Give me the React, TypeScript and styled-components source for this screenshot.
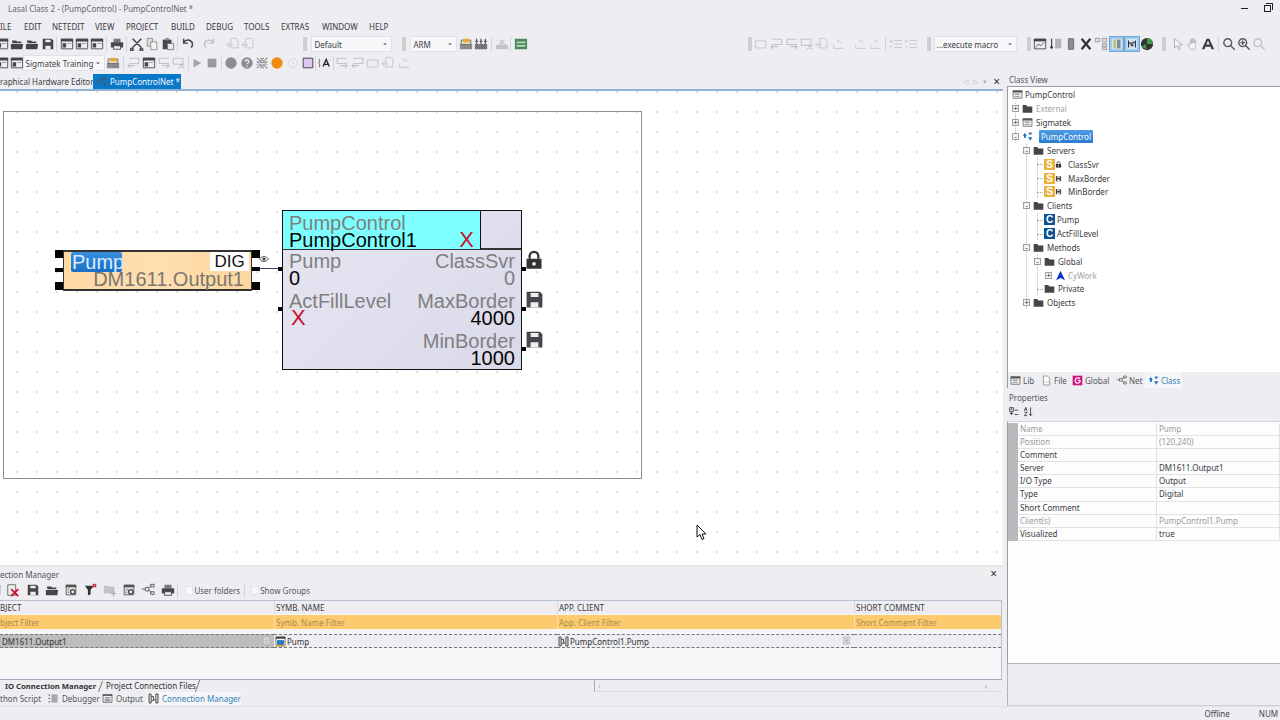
import React from 'react';
import styled, { createGlobalStyle } from 'styled-components';

const GlobalStyle = createGlobalStyle`
  html, body { margin: 0; padding: 0; background: #eeeef2; overflow: hidden; }
  * { box-sizing: border-box; }
`;

const UI_FONT = '"Noto Sans", "Open Sans", sans-serif';
const DIAGRAM_FONT = '"Liberation Sans", Arial, sans-serif';
const DARK = '#45454a';
const FAINT = '#c2c2c8';

/* ---------- small toolbar / tree drawings ---------- */

type IconName =
  | 'folder' | 'folderOpen' | 'save' | 'print' | 'panel' | 'cut' | 'copy' | 'paste' | 'undo' | 'redo'
  | 'ghostDoc' | 'ghostBox' | 'ghostIn' | 'ghostOut' | 'ghostX' | 'ghostLine' | 'indent' | 'play' | 'stop'
  | 'dot' | 'help' | 'hatch' | 'orange' | 'faintDot' | 'lilac' | 'textA' | 'build' | 'buildGrey' | 'board'
  | 'buildNew' | 'chart' | 'sort' | 'column' | 'tools' | 'tree' | 'bars' | 'link' | 'globe' | 'pointer' | 'hand'
  | 'bigA' | 'zoom' | 'zoomIn' | 'zoomGhost' | 'net' | 'classIcon' | 'lib' | 'file' | 'global' | 'filterX'
  | 'deleteX' | 'config' | 'addDoc' | 'debugger' | 'output' | 'manager' | 'lock' | 'eye' | 'io' | 'note'
  | 'dropdown' | 'sortAz' | 'categ' | 'method';

const drawing: Record<IconName, React.ReactNode> = {
  folder: <path d="M1 3h5l2 2h7v9H1z" fill={DARK} />,
  folderOpen: <path d="M2 4h5l1 1h5v2H5l-2 0zM1 8h14l-1 6H1z" fill={DARK} />,
  save: <><path d="M2 2h10l2 2v10H2z" fill={DARK} /><path d="M5 3h6v3H5zM5 10h6v4H5z" fill="#eee" /></>,
  print: <><path d="M4 2h8v4H4z" fill="#777" /><path d="M1 6h14v6H1z" fill={DARK} /><path d="M4 10h8v4H4z" fill="#eee" stroke={DARK} /></>,
  panel: <><path d="M1.500 2.500h13v11h-13z" fill="none" stroke={DARK} /><path d="M1 2h14v3H1zM3 7h4v5H3z" fill={DARK} /><path d="M8 7h5v1H8z" fill="#999" /></>,
  cut: <path d="M3 2l10 10M13 2L3 12M2 13a1.500 1.500 0 1 0 .1 0M13 13a1.500 1.500 0 1 0 .1 0" fill="none" stroke={DARK} strokeWidth="1.800" />,
  copy: <><path d="M2.500 1.500h6v9h-6z" fill="#ddd" stroke="#888" /><path d="M6.500 5.500h7v9h-7z" fill="#f3f3f3" stroke="#888" /></>,
  paste: <><path d="M2 3h10v11H2z" fill={DARK} /><path d="M5 1h4v3H5z" fill="#888" /><path d="M7.500 7.500h7v7h-7z" fill="#eee" stroke="#777" /></>,
  undo: <path d="M3 6c2-3 8-4 10 1 .6 2-.4 4-1.500 5M3 2v5h5" fill="none" stroke={DARK} strokeWidth="1.700" />,
  redo: <path d="M13 6C11 3 5 2 3 7c-.6 2 .4 4 1.500 5M13 2v5H8" fill="none" stroke={FAINT} strokeWidth="1.700" />,
  ghostDoc: <><path d="M5.500 1.500h6l2 2v9h-8z" fill="none" stroke={FAINT} /><path d="M1 9h7M4 6l-3 3 3 3" fill="none" stroke={FAINT} /></>,
  ghostBox: <path d="M1.500 4.500h12v8h-12z" fill="none" stroke={FAINT} />,
  ghostIn: <path d="M2.500 2.500h11v6h-11M1 11h8M4 8l-3 3 3 3" fill="none" stroke={FAINT} strokeWidth="1.200" />,
  ghostOut: <path d="M13.500 2.500h-11v6h11M6 11h8M11 8l3 3-3 3" fill="none" stroke={FAINT} strokeWidth="1.200" />,
  ghostX: <path d="M1.500 2.500h11v7h-11zM8 9l6 5M14 9l-6 5" fill="none" stroke={FAINT} strokeWidth="1.200" />,
  ghostLine: <path d="M3 13h11M3 13V9M8 3l4 4M8 3v3" fill="none" stroke={FAINT} />,
  indent: <path d="M1 5h3M2.500 3.500v3M1 11h3M6 4h9M6 8h9M6 12h9" fill="none" stroke={FAINT} />,
  play: <path d="M4 3l9 5-9 5z" fill="#a6a6aa" />,
  stop: <path d="M3 3h10v10H3z" fill="#9a9a9e" />,
  dot: <circle cx="8" cy="8" r="6.500" fill="#8d8d91" />,
  help: <><circle cx="8" cy="8" r="6.500" fill="#8d8d91" /><path d="M5.800 6.200C6 4 10 4 10 6.200 10 8 8 7.800 8 9.500M8 11v1.500" fill="none" stroke="#eee" strokeWidth="1.500" /></>,
  hatch: <path d="M2 2l12 12M14 2L2 14M6 2l8 8M2 6l8 8M10 2L2 10M14 6l-8 8" fill="none" stroke="#9a9a9e" strokeWidth="1.300" />,
  orange: <circle cx="8" cy="8" r="6.500" fill="#f28a0f" />,
  faintDot: <><circle cx="8" cy="8" r="6" fill="#e2e2e6" /><circle cx="8" cy="8" r="3" fill="none" stroke="#fff" /></>,
  lilac: <path d="M2.500 2.500h11v11h-11z" fill="#dcc7f5" stroke="#333" />,
  textA: <><path d="M2 4c2-1 1 3 0 4 1 1 2 5 0 4" fill="none" stroke="#444" /><path d="M6 3h9v10H6z" fill="#e8e8ea" /><path d="M7 12l3.500-8L14 12M8.500 9.500h4" fill="none" stroke="#222" strokeWidth="1.500" /></>,
  build: <><path d="M1 8h14v6H1z" fill="#8a8a8a" /><path d="M2.500 3.500h11v5h-11z" fill="#e8dcc0" stroke="#666" /><path d="M5 2h7v4H5z" fill="#e9a832" /></>,
  buildGrey: <><path d="M1 8h14v6H1z" fill="#777" /><path d="M3 2v6M8 2v6M13 2v6M1.500 5h3M6.500 5h3M11.500 5h3" stroke="#555" strokeWidth="1.300" /></>,
  board: <><path d="M1 2h14v12H1z" fill="#4a8a60" /><path d="M3 5h10v2H3zM3 9h10v2H3z" fill="#b7d8bc" /></>,
  buildNew: <><path d="M1 9h14v5H1z" fill={FAINT} /><path d="M5 3l6 5M11 3L5 8" stroke={FAINT} strokeWidth="1.400" /><path d="M4 8h8" stroke={FAINT} /></>,
  chart: <><path d="M1.500 2.500h13v11h-13z" fill="#eee" stroke={DARK} /><path d="M1 2h14v3H1z" fill={DARK} /><path d="M3 12l3-4 3 2 4-4" fill="none" stroke="#555" /></>,
  sort: <><path d="M3 2v11M1.500 11L3 13l1.500-2" fill="none" stroke="#333" strokeWidth="1.200" /><path d="M7 2h7v11H7z" fill="#b3b3b7" /></>,
  column: <path d="M5 2h6v12H5z" fill="#8d8d91" stroke="#666" />,
  tools: <path d="M3 2l10 12M13 2L3 14" stroke="#333" strokeWidth="2.600" />,
  tree: <path d="M1.500 1.500h5v4h-5zM9.500 1.500h5v4h-5zM9.500 7.500h5v3h-5zM9.500 11.500h5v3h-5z" fill="#ddd" stroke="#999" />,
  bars: <><path d="M1 1h14v14H1z" fill="#cfe4f7" stroke="#6da5d6" /><path d="M4 3h3v10H4z" fill="#c0bf7a" /><path d="M8 3h4v10H8z" fill="#7b8f8f" /></>,
  link: <><path d="M1 1h14v14H1z" fill="#cfe4f7" stroke="#6da5d6" /><path d="M4 4v8M12 4v8M4 7h3v3h2V6h3" fill="none" stroke="#333" strokeWidth="1.200" /></>,
  globe: <><circle cx="8" cy="8" r="7" fill="#333" /><path d="M8 1a7 7 0 0 1 7 7H8zM2 11l4-3 2 6z" fill="#3f9c4a" /></>,
  pointer: <path d="M4 1.500v11l3-2.500 2 4.500 2-1-2-4.500h4z" fill="#f4f4f6" stroke="#aaa" />,
  hand: <path d="M5 14l-3-5 1.500-1L5 9V3h1.500v4-5H8v5-4.500h1.500V7V4H11v6l-1 4z" fill="#f4f4f6" stroke="#aaa" strokeWidth=".8" />,
  bigA: <path d="M1 14L6.500 2h3L15 14h-3l-1-3H5l-1 3zM6 8.500h4L8 4z" fill="#3a3a3e" fillRule="evenodd" />,
  zoom: <path d="M6.500 2a4.500 4.500 0 1 0 .1 0M10 10l4.500 4.500" fill="none" stroke="#555" strokeWidth="1.500" />,
  zoomIn: <path d="M6.500 2a4.500 4.500 0 1 0 .1 0M10 10l4.500 4.500M4 6.500h5M6.500 4v5" fill="none" stroke="#555" strokeWidth="1.500" />,
  zoomGhost: <path d="M6.500 2a4.500 4.500 0 1 0 .1 0M10 10l4.500 4.500" fill="none" stroke={FAINT} strokeWidth="1.500" />,
  net: <path d="M1 7h4M5 5h4v4H5zM9 6l3-3M9 8l3 3M11 1.500h4v3h-4zM11 10h4v3h-4z" fill="none" stroke="#555" />,
  classIcon: <path d="M1 7l3-4 3 4-1.500 0v3H3V7zM10 2h4v3h-4zM12 5v5M9 9h6l-3 5z" fill="#1b6ec2" />,
  lib: <><path d="M1.500 2.500h13v11h-13z" fill="#eee" stroke="#555" /><path d="M1 2h14v3H1zM4 7h7v1H4zM4 10h7v1H4z" fill="#555" /></>,
  file: <><path d="M3.500 1.500h6l3 3v10h-9z" fill="#fff" stroke="#777" /><path d="M5 10h1M7.500 10h1M10 10h1" stroke="#555" /></>,
  global: <><path d="M1 1h14v14H1z" fill="#d3137c" /><path d="M11.500 5.500C10 3.500 5 3.500 4.500 8c0 4.500 5.500 4.500 7 2.500V8H8.500" fill="none" stroke="#fff" strokeWidth="1.800" /></>,
  filterX: <><path d="M1 3h10L7.500 8v5l-3 1V8z" fill="#333" /><path d="M10 1l4 4M14 1l-4 4" stroke="#c8102e" strokeWidth="1.500" /></>,
  deleteX: <><path d="M2 2h9v12H2z" fill="#eee" stroke="#666" /><path d="M6 7l8 8M14 7l-8 8" stroke="#c8102e" strokeWidth="2" /></>,
  config: <><path d="M2.500 2.500h11v11h-11z" fill="#eee" stroke="#555" /><path d="M2 2h12v3H2z" fill="#555" /><circle cx="10" cy="10" r="2.500" fill="none" stroke="#444" strokeWidth="1.500" /><path d="M4 7h3M4 9h2M4 11h2" stroke="#777" /></>,
  addDoc: <><path d="M1 3h5l1 1h6v8H1z" fill={FAINT} /><path d="M12 9v6M9 12h6" stroke="#aaa" strokeWidth="1.400" /></>,
  debugger: <><path d="M1 3h2M1 8h2M1 13h2" stroke="#333" strokeWidth="1.400" /><path d="M5 2h9v12H5z" fill="#a9a9ad" /></>,
  output: <><path d="M1.500 2.500h13v11h-13z" fill="#f2f2f2" stroke="#444" /><path d="M1 2h14v2H1zM4 6h8v1H4zM4 8.500h8v1H4zM4 11h8v1H4z" fill="#444" /></>,
  manager: <path d="M1.500 1.500h3v13h-3zM11.500 1.500h3v13h-3zM5 5h3v5h3M5 11h3" fill="none" stroke="#333" strokeWidth="1.300" />,
  lock: <><path d="M4.500 7V5a3.500 3.500 0 0 1 7 0v2" fill="none" stroke="#333" strokeWidth="1.800" /><path d="M2 7h12v8H2z" fill="#333" /><circle cx="8" cy="11" r="1.500" fill="#eee" /></>,
  eye: <><path d="M1 8c3-5 11-5 14 0-3 5-11 5-14 0z" fill="none" stroke="#444" strokeWidth="1.500" /><circle cx="8" cy="8" r="2.500" fill="#444" /></>,
  io: <><path d="M1.500 1.500h13v13h-13z" fill="#fff" stroke="#444" /><path d="M1 1h14v3H1z" fill="#444" /><path d="M3 6h10v7H3z" fill="#2b78c2" /><path d="M1 13h14v2H1z" fill="#e0a030" /></>,
  note: <><path d="M2.500 1.500h11v13h-11z" fill="#ddd" stroke="#aaa" /><path d="M5 5h6M5 8h6M5 11h6" stroke="#999" /></>,
  dropdown: <path d="M5 7h6l-3 3z" fill="#555" />,
  sortAz: <path d="M2 7l2-5 2 5M2.800 5h2.400M2 9h4l-4 5h4M11 2v12M8.500 11.500L11 14l2.500-2.500" fill="none" stroke="#333" strokeWidth="1.200" />,
  categ: <path d="M1 1h6v6H1zM3 3.500h2M4 2.500v2M1 10h6M4 8v5M9 5h6M9 12h6" fill="none" stroke="#333" strokeWidth="1.300" />,
  method: <path d="M8 1l6.500 14L8 11.500 1.500 15z" fill="#0a2fd0" />,
};

const Icon = ({ name, size = 14 }: { name: IconName; size?: number }) => (
  <svg width={size} height={size} viewBox="0 0 16 16" style={{ display: 'block', flex: 'none' }}>
    {drawing[name]}
  </svg>
);

/* ---------- chrome ---------- */

const Page = styled.div`
  width: 1280px;
  height: 720px;
  overflow: hidden;
  display: flex;
  flex-direction: column;
  background: #eeeef2;
  color: #2d2d30;
  font-family: ${UI_FONT};
  font-size: 8px;
`;

const TitleBar = styled.div`
  height: 18px;
  display: flex;
  align-items: center;
  justify-content: space-between;
  padding: 0 9px 1px 8px;
  color: #66666a;
`;

const WindowButtons = styled.div`
  display: flex;
  align-items: center;
  gap: 16px;
`;

const Minimize = styled.span`
  width: 7px;
  height: 1px;
  background: #222;
`;

const Restore = styled.span`
  width: 7px;
  height: 7px;
  border: 1px solid #222;
  box-shadow: 1px -1px 0 0 #eeeef2, 2px -2px 0 0 #222;
`;

const MenuBar = styled.div`
  height: 17px;
  display: flex;
  align-items: center;
  color: #38383c;
`;

const MenuItem = styled.span<{ $w: number }>`
  width: ${({ $w }) => $w}px;
  flex: none;
`;

const ToolRow = styled.div`
  height: 18px;
  display: flex;
  align-items: center;
  flex: none;
  & + & { margin-top: 1px; }
`;

const Slot = styled.span<{ $on?: boolean; $w?: number }>`
  width: ${({ $w }) => $w ?? 15.3}px;
  height: 16px;
  flex: none;
  display: flex;
  align-items: center;
  justify-content: center;
  ${({ $on }) => $on && 'outline: 1px solid #6da5d6; outline-offset: -1px; background: #d9e8f6;'}
`;

const Gap = styled.span<{ $w: number }>`
  margin-left: ${({ $w }) => $w}px;
  flex: none;
`;

const Sep = styled.span<{ $l?: number; $r?: number }>`
  width: 1px;
  height: 15px;
  flex: none;
  background: #d4d4da;
  margin: 0 ${({ $r }) => $r ?? 2}px 0 ${({ $l }) => $l ?? 2}px;
`;

const Grip = styled.span<{ $l: number; $r: number }>`
  width: 4px;
  height: 14px;
  flex: none;
  margin: 0 ${({ $r }) => $r}px 0 ${({ $l }) => $l}px;
  background-image: radial-gradient(circle, #a9a9ae 0.6px, transparent 0.8px);
  background-size: 2px 2px;
`;

const Combo = styled.div<{ $w: number }>`
  width: ${({ $w }) => $w}px;
  height: 16px;
  flex: none;
  background: #f7f7f9;
  border: 1px solid #e2e2e6;
  display: flex;
  align-items: center;
  justify-content: space-between;
  padding: 0 1px 0 2px;
  color: #3e3e42;
  white-space: nowrap;
`;

/* ---------- work area ---------- */

const Workspace = styled.div`
  flex: 1;
  min-height: 0;
  display: grid;
  grid-template-columns: 1003px 4px 273px;
`;

const LeftColumn = styled.div`
  display: flex;
  flex-direction: column;
  min-height: 0;
`;

const DocTabs = styled.div`
  height: 19px;
  flex: none;
  display: flex;
  align-items: flex-end;
  justify-content: space-between;
  border-bottom: 2px solid #8fb2d9;
  padding-right: 3px;
`;

const DocTab = styled.div<{ $active?: boolean }>`
  height: 15px;
  display: flex;
  align-items: center;
  gap: 3px;
  padding: 0 0 1px ${({ $active }) => ($active ? '3px' : 0)};
  margin-right: 2px;
  width: ${({ $active }) => ($active ? '88px' : '91px')};
  background: ${({ $active }) => ($active ? '#0a78c8' : 'transparent')};
  color: ${({ $active }) => ($active ? '#f4f9ff' : '#3e3e42')};
  white-space: nowrap;
`;

const TabList = styled.div`
  display: flex;
  align-items: flex-end;
`;

const DocNav = styled.div`
  height: 15px;
  display: flex;
  align-items: center;
  gap: 5px;
  color: #b5b5ba;
  font-size: 7px;
`;

const CloseMark = styled.span`
  color: #333;
  font-size: 12px;
  line-height: 1;
  margin-left: 1px;
`;

const Canvas = styled.div`
  height: 474px;
  flex: none;
  position: relative;
  overflow: hidden;
  background-color: #ffffff;
  background-image: radial-gradient(circle, #cfcfcf 0.6px, transparent 0.9px);
  background-size: 20px 20px;
  background-position: 7px -9px;
  font-family: ${DIAGRAM_FONT};
`;

const Sheet = styled.div`
  position: absolute;
  left: 3px;
  top: 20px;
  width: 639px;
  height: 368px;
  border: 1px solid #8c8c8c;
`;

const Pin = styled.span<{ $x: number; $y: number; $w: number; $h: number }>`
  position: absolute;
  left: ${({ $x }) => $x}px;
  top: ${({ $y }) => $y}px;
  width: ${({ $w }) => $w}px;
  height: ${({ $h }) => $h}px;
  background: #050505;
`;

const Wire = styled.span`
  position: absolute;
  left: 260px;
  top: 177px;
  width: 19px;
  height: 1px;
  background: #3d3d78;
`;

const OutputNode = styled.div`
  position: absolute;
  left: 63px;
  top: 159px;
  width: 189px;
  height: 41px;
  border-top: 2px solid #333;
  border-bottom: 2px solid #333;
  border-left: 1px solid #333;
  border-right: 1px solid #333;
  background: linear-gradient(90deg, #fdd9a4, #fedfb0 50%, #fdd79e);
  display: flex;
  flex-direction: column;
  font-size: 20px;
  line-height: 20px;
`;

const NodeTop = styled.div`
  height: 19px;
  flex: none;
  display: flex;
  justify-content: space-between;
  padding: 0 2px 0 7px;
`;

const Highlighted = styled.span`
  width: 51px;
  height: 20px;
  background: linear-gradient(#3a90e0, #1b6ec4);
  border-radius: 2px;
  color: #d9ecff;
  padding-left: 1px;
`;

const KindTag = styled.span`
  width: 39px;
  height: 19px;
  background: #fff;
  color: #111;
  font-size: 17px;
  text-align: center;
`;

const NodeServer = styled.div`
  text-align: right;
  padding-right: 7px;
  color: #7c7772;
  line-height: 17px;
`;

const ClassNode = styled.div`
  position: absolute;
  left: 282px;
  top: 119px;
  width: 240px;
  height: 160px;
  border: 1px solid #111;
  background: linear-gradient(135deg, #e6e6f2, #d9d9ea);
  display: flex;
  flex-direction: column;
  font-size: 20px;
`;

const ClassHead = styled.div`
  height: 39px;
  flex: none;
  display: grid;
  grid-template-columns: 198px 1fr;
  border-bottom: 2px solid #333;
`;

const ClassTitle = styled.div`
  background: #7dffff;
  border-right: 1px solid #111;
  padding: 3px 6px 0;
  position: relative;
`;

const GreyLine = styled.div<{ $right?: boolean }>`
  height: 19px;
  line-height: 19px;
  color: #7f7f7f;
  text-align: ${({ $right }) => ($right ? 'right' : 'left')};
  white-space: nowrap;
`;

const BlackLine = styled.div<{ $right?: boolean; $grey?: boolean }>`
  height: 18px;
  line-height: 18px;
  margin-top: -2px;
  color: ${({ $grey }) => ($grey ? '#7f7f7f' : '#050505')};
  text-align: ${({ $right }) => ($right ? 'right' : 'left')};
  white-space: nowrap;
`;

const CrossMark = styled.span`
  color: #c8102e;
  font-size: 22px;
`;

const PortCross = styled(CrossMark)`
  margin-left: 2px;
`;

const TitleCross = styled(CrossMark)`
  position: absolute;
  right: 6px;
  bottom: -1px;
  line-height: 20px;
`;

const PortGrid = styled.div`
  display: grid;
  grid-template-columns: 1fr 1fr;
  grid-auto-rows: 40px;
  padding: 2px 6px 0;
`;

const PortCell = styled.div``;

const Overlay = styled.span<{ $x: number; $y: number }>`
  position: absolute;
  left: ${({ $x }) => $x}px;
  top: ${({ $y }) => $y}px;
`;

const Splitter = styled.div`
  height: 2px;
  flex: none;
  background: #e6e6ea;
`;

/* ---------- connection manager ---------- */

const ManagerPanel = styled.div`
  height: 125px;
  flex: none;
  display: flex;
  flex-direction: column;
  margin-right: 1px;
`;

const PanelTitle = styled.div<{ $pad?: number; $left?: number }>`
  height: 14px;
  flex: none;
  display: flex;
  align-items: center;
  gap: 5px;
  padding: 0 ${({ $pad }) => $pad ?? 2}px 0 ${({ $left }) => $left ?? 0}px;
  color: #55555a;
  white-space: nowrap;
`;

const Dotted = styled.span`
  flex: 1;
  height: 5px;
  background-image: radial-gradient(circle, #c4c4c8 0.5px, transparent 0.7px);
  background-size: 2px 2px;
`;

const ManagerTools = styled.div`
  height: 18px;
  flex: none;
  display: flex;
  align-items: center;
  color: #55555a;
`;

const CheckBox = styled.span`
  width: 8px;
  height: 9px;
  background: #f8f8fa;
  border: 1px solid #e4e4e8;
  flex: none;
  margin-right: 1px;
`;

const ConnectionGrid = styled.div`
  flex: 1;
  margin-top: 1px;
  background: #f6f6f8;
  border-top: 1px solid #b6c2d2;
  border-right: 1px solid #b6c2d2;
  border-bottom: 1px solid #9eaabc;
  min-height: 0;
`;

const GridRow = styled.div<{ $h: number; $top?: number }>`
  display: grid;
  grid-template-columns: 274px 283px 297px 1fr;
  height: ${({ $h }) => $h}px;
  margin-top: ${({ $top }) => $top ?? 0}px;
  align-items: stretch;
`;

const HeadCell = styled.div`
  display: flex;
  align-items: center;
  padding-left: 1px;
  border-left: 1px solid #d8d8de;
  color: #3a3a3e;
  background: #eeeef2;
  &:first-child { border-left: 0; padding-left: 0; }
`;

const FilterCell = styled.div`
  display: flex;
  align-items: center;
  padding-left: 1px;
  background: #fdcb6e;
  border-left: 1px solid #fde0a8;
  color: #a88a50;
  &:first-child { border-left: 0; padding-left: 0; }
`;

const DataCell = styled.div<{ $selected?: boolean }>`
  display: flex;
  align-items: center;
  gap: 1px;
  position: relative;
  background: ${({ $selected }) => ($selected ? '#bdbdbd' : '#eeeef2')};
  border-top: 1px dashed #777;
  border-bottom: 1px dashed #777;
  color: #333;
  padding-left: ${({ $selected }) => ($selected ? 2 : 1)}px;
`;

const CellNote = styled.span`
  position: absolute;
  right: 3px;
  top: 1px;
`;

const BottomTabs = styled.div`
  height: 12px;
  flex: none;
  display: flex;
  align-items: center;
  color: #333;
  white-space: nowrap;
`;

const ConnTab = styled.span<{ $bold?: boolean; $w: number }>`
  width: ${({ $w }) => $w}px;
  flex: none;
  font-weight: ${({ $bold }) => ($bold ? 700 : 400)};
  font-size: ${({ $bold }) => ($bold ? 7.7 : 8)}px;
  border-right: 1px solid #777;
  transform: skewX(-20deg);
  & > span { display: block; transform: skewX(20deg); padding: 0 0 1px 5px; }
`;

const ScrollTrack = styled.div`
  margin-left: auto;
  width: 408px;
  height: 12px;
  display: flex;
  align-items: center;
  justify-content: space-between;
  padding: 0 15px 0 3px;
  border-left: 1px solid #aaa;
  border-bottom: 1px solid #dcdce0;
  color: #b0b0b5;
`;

const ToolWindows = styled.div`
  height: 14px;
  flex: none;
  display: flex;
  align-items: center;
  padding-bottom: 1px;
  color: #555;
  white-space: nowrap;
`;

const ToolWindowTab = styled.div<{ $active?: boolean; $w: number; $flush?: boolean }>`
  width: ${({ $w }) => $w}px;
  height: 13px;
  flex: none;
  display: flex;
  align-items: center;
  gap: 3px;
  padding-left: ${({ $flush }) => ($flush ? 0 : 2)}px;
  background: ${({ $active }) => ($active ? '#f6f6f9' : 'transparent')};
  color: ${({ $active }) => ($active ? '#2f7fb8' : '#55555a')};
`;

/* ---------- right column ---------- */

const RightColumn = styled.div`
  display: flex;
  flex-direction: column;
  min-height: 0;
`;

const TreeBox = styled.div`
  height: 286px;
  flex: none;
  background: #fff;
  border-top: 1px solid #9a9a9e;
  border-left: 1px solid #9a9a9e;
  padding: 1px 0 0 2px;
  overflow: hidden;
`;

const TreeRowBox = styled.div`
  height: 13.87px;
  display: flex;
  align-items: center;
  white-space: nowrap;
  color: #3a3a3e;
`;

const IndentCell = styled.span<{ $line?: boolean }>`
  width: 11px;
  height: 100%;
  flex: none;
  ${({ $line }) => $line && 'background: linear-gradient(#bbb 50%, transparent 50%) 5px 0 / 1px 2px repeat-y;'}
`;

const RootIndent = styled.span`
  width: 1px;
  flex: none;
`;

const ExpanderCell = styled.span<{ $above?: boolean; $below?: boolean; $leaf?: boolean }>`
  width: 11px;
  height: 100%;
  flex: none;
  position: relative;
  display: flex;
  align-items: center;
  justify-content: center;
  ${({ $above, $below }) =>
    ($above || $below) &&
    `background: linear-gradient(#bbb 50%, transparent 50%) 5px ${$above ? '0' : '7px'} / 1px 2px repeat-y;`}
  &::after {
    ${({ $leaf }) =>
      $leaf && `content: ''; position: absolute; left: 5px; top: 7px; width: 6px; border-top: 1px dotted #aaa;`}
  }
`;

const ExpanderBox = styled.span`
  width: 7px;
  height: 7px;
  background: #f2f2f2;
  border: 1px solid #a0a0a4;
  color: #333;
  font: 8px/5px ${DIAGRAM_FONT};
  text-align: center;
  z-index: 1;
`;

const TreeIcon = styled.span<{ $gap: number }>`
  display: flex;
  align-items: center;
  flex: none;
  margin: 0 ${({ $gap }) => $gap}px 0 1px;
`;

const SBadge = styled.span`
  width: 11px;
  height: 11px;
  background: #eeb13c;
  color: #fff;
  font: 700 10px/11px ${DIAGRAM_FONT};
  text-align: center;
  flex: none;
`;

const CBadge = styled(SBadge)`
  background: #0b5394;
`;

const TreeLabel = styled.span<{ $selected?: boolean; $muted?: boolean }>`
  color: ${({ $selected, $muted }) => ($selected ? '#fff' : $muted ? '#a2a2a6' : '#3a3a3e')};
  ${({ $selected }) =>
    $selected && `background: linear-gradient(#4d9be4, #2a7dd0); padding: 0 2px; height: 13px; line-height: 13px; border-radius: 1px;`}
`;

const PanelTabs = styled.div`
  height: 16px;
  flex: none;
  display: flex;
  align-items: center;
  padding-left: 2px;
  border-left: 1px solid #9a9a9e;
  color: #55555a;
`;

const PanelTab = styled.div<{ $active?: boolean; $w: number }>`
  width: ${({ $w }) => $w}px;
  height: 16px;
  flex: none;
  display: flex;
  align-items: center;
  gap: 2px;
  padding-left: ${({ $active }) => ($active ? 3 : 0)}px;
  background: ${({ $active }) => ($active ? '#f6f6f9' : 'transparent')};
  color: ${({ $active }) => ($active ? '#2f7fb8' : '#55555a')};
`;

const PropsTools = styled.div`
  height: 17px;
  flex: none;
  display: flex;
  align-items: center;
  padding: 0 0 2px 2px;
  gap: 4px;
`;

const PropsGrid = styled.div`
  height: 243px;
  flex: none;
  padding-top: 1px;
  background: #fdfdfd;
  border-top: 1px solid #d4d4d8;
  border-bottom: 1px solid #b4b4b8;
  border-left: 1px solid #9a9a9e;
`;

const PropRow = styled.div<{ $muted?: boolean }>`
  height: 13.1px;
  display: grid;
  grid-template-columns: 10px 139px 1fr;
  color: ${({ $muted }) => ($muted ? '#9a9a9e' : '#3a3a3e')};
  line-height: 12px;
`;

const PropMargin = styled.span`
  background: #b9b9bd;
`;

const PropCell = styled.span`
  padding-left: 2px;
  border-bottom: 1px solid #e2e2e6;
  border-right: 1px solid #e2e2e6;
  white-space: nowrap;
`;

const FootBox = styled.div`
  flex: 1;
  border-left: 1px solid #b4b4b8;
  border-bottom: 1px solid #cfcfd3;
`;

const PanelGap = styled.div<{ $h: number }>`
  height: ${({ $h }) => $h}px;
  flex: none;
`;

const StatusBar = styled.div`
  height: 14px;
  flex: none;
  display: flex;
  align-items: center;
  justify-content: flex-end;
  gap: 29px;
  padding-right: 2px;
  border-top: 1px solid #e2e2e6;
  color: #44444a;
`;

const Cursor = styled.svg`
  position: absolute;
  left: 696px;
  top: 433px;
`;

/* ---------- data ---------- */

const menu: [string, number][] = [
  ['ILE', 24], ['EDIT', 28], ['NETEDIT', 43], ['VIEW', 31], ['PROJECT', 45], ['BUILD', 35], ['DEBUG', 38],
  ['TOOLS', 37], ['EXTRAS', 41], ['WINDOW', 47], ['HELP', 30],
];

type TreeItem = {
  guides: boolean[];
  box?: '+' | '-';
  leaf?: boolean;
  above?: boolean;
  below?: boolean;
  icon: React.ReactNode;
  gap: number;
  label: string;
  selected?: boolean;
  muted?: boolean;
};

const folderIcon = <Icon name="folder" size={11} />;
const badge = (kind: 'lock' | 'save') => (
  <>
    <SBadge>S</SBadge>
    <Icon name={kind} size={7} />
  </>
);

const treeItems: TreeItem[] = [
  { guides: [], box: '+', below: true, icon: folderIcon, gap: 3, label: 'External', muted: true },
  { guides: [], box: '+', above: true, below: true, icon: <Icon name="lib" size={11} />, gap: 3, label: 'Sigmatek' },
  { guides: [], box: '-', above: true, icon: <Icon name="classIcon" size={11} />, gap: 6, label: 'PumpControl', selected: true },
  { guides: [false], box: '-', below: true, icon: folderIcon, gap: 3, label: 'Servers' },
  { guides: [false, true], leaf: true, above: true, below: true, icon: badge('lock'), gap: 6, label: 'ClassSvr' },
  { guides: [false, true], leaf: true, above: true, below: true, icon: badge('save'), gap: 6, label: 'MaxBorder' },
  { guides: [false, true], leaf: true, above: true, icon: badge('save'), gap: 6, label: 'MinBorder' },
  { guides: [false], box: '-', above: true, below: true, icon: folderIcon, gap: 3, label: 'Clients' },
  { guides: [false, true], leaf: true, above: true, below: true, icon: <CBadge>C</CBadge>, gap: 2, label: 'Pump' },
  { guides: [false, true], leaf: true, above: true, icon: <CBadge>C</CBadge>, gap: 2, label: 'ActFillLevel' },
  { guides: [false], box: '-', above: true, below: true, icon: folderIcon, gap: 3, label: 'Methods' },
  { guides: [false, true], box: '-', below: true, icon: folderIcon, gap: 3, label: 'Global' },
  { guides: [false, true, true], box: '+', icon: <Icon name="method" size={11} />, gap: 2, label: 'CyWork', muted: true },
  { guides: [false, true], leaf: true, above: true, icon: folderIcon, gap: 3, label: 'Private' },
  { guides: [false], box: '+', above: true, icon: folderIcon, gap: 3, label: 'Objects' },
];

const props: [string, string, boolean][] = [
  ['Name', 'Pump', true],
  ['Position', '(120,240)', true],
  ['Comment', '', false],
  ['Server', 'DM1611.Output1', false],
  ['I/O Type', 'Output', false],
  ['Type', 'Digital', false],
  ['Short Comment', '', false],
  ['Client(s)', 'PumpControl1.Pump', true],
  ['Visualized', 'true', false],
];

const slots = (names: IconName[], onNames: IconName[] = [], w?: number) =>
  names.map((n, i) => (
    <Slot key={`${n}${i}`} $on={onNames.includes(n)} $w={w}>
      <Icon name={n} />
    </Slot>
  ));

function TreeRow({ item }: { item: TreeItem }) {
  return (
    <TreeRowBox>
      {item.guides.map((line, i) => (
        <IndentCell key={i} $line={line} />
      ))}
      <ExpanderCell $above={item.above} $below={item.below} $leaf={item.leaf}>
        {item.box && <ExpanderBox>{item.box}</ExpanderBox>}
      </ExpanderCell>
      <TreeIcon $gap={item.gap}>{item.icon}</TreeIcon>
      <TreeLabel $selected={item.selected} $muted={item.muted}>
        {item.label}
      </TreeLabel>
    </TreeRowBox>
  );
}

export default function App() {
  return (
    <Page>
      <GlobalStyle />
      <TitleBar>
        <span>Lasal Class 2 - (PumpControl) - PumpControlNet *</span>
        <WindowButtons>
          <Minimize />
          <Restore />
        </WindowButtons>
      </TitleBar>

      <MenuBar>
        {menu.map(([label, w]) => (
          <MenuItem key={label} $w={w}>{label}</MenuItem>
        ))}
      </MenuBar>

      <ToolRow>
        <Gap $w={-6} />
        {slots(['panel', 'folderOpen', 'folderOpen', 'save'])}
        <Sep $l={1} />
        {slots(['panel', 'panel', 'panel'])}
        <Sep $l={1} />
        {slots(['print'])}
        <Sep />
        {slots(['cut', 'copy', 'paste'])}
        <Sep />
        <Slot><Icon name="undo" /></Slot>
        <Gap $w={6} />
        <Slot><Icon name="redo" /></Slot>
        <Gap $w={8} />
        {slots(['ghostDoc', 'ghostDoc'])}
        <Grip $l={48} $r={4} />
        <Combo $w={81}>Default<Icon name="dropdown" size={10} /></Combo>
        <Grip $l={10} $r={4} />
        <Combo $w={47}>ARM<Icon name="dropdown" size={10} /></Combo>
        <Gap $w={1} />
        {slots(['build', 'buildGrey'])}
        <Sep />
        {slots(['buildNew'])}
        <Sep $l={1} />
        {slots(['board'])}
        <Grip $l={219} $r={2} />
        {slots(['ghostBox', 'ghostIn', 'ghostOut', 'ghostX', 'ghostDoc', 'ghostLine'])}
        <Gap $w={7} />
        {slots(['ghostLine', 'ghostLine'])}
        <Sep />
        {slots(['indent', 'indent'])}
        <Grip $l={8} $r={3} />
        <Combo $w={83}>...execute macro<Icon name="dropdown" size={10} /></Combo>
        <Grip $l={10} $r={2} />
        {slots(['chart', 'sort', 'column', 'tools', 'tree', 'bars', 'link', 'globe'], ['bars', 'link'])}
        <Grip $l={7} $r={4} />
        {slots(['pointer', 'hand', 'bigA'])}
        <Sep />
        {slots(['zoom', 'zoomIn', 'zoomGhost'])}
      </ToolRow>

      <ToolRow>
        <Gap $w={-6} />
        {slots(['panel', 'panel'])}
        <Gap $w={-2} />
        <Combo $w={82}>Sigmatek Training<Icon name="dropdown" size={10} /></Combo>
        <Gap $w={1} />
        {slots(['build'])}
        <Sep />
        {slots(['ghostIn', 'panel', 'ghostOut', 'ghostX'])}
        <Sep $l={1} $r={0} />
        {slots(['play', 'stop'])}
        <Sep $l={1} $r={2} />
        {slots(['dot', 'help', 'hatch', 'orange', 'faintDot', 'lilac'])}
        <Sep $l={0} $r={0} />
        {slots(['textA'])}
        <Sep $l={1} $r={1} />
        {slots(['ghostOut', 'ghostIn', 'ghostBox', 'ghostDoc', 'ghostLine'])}
      </ToolRow>

      <Workspace>
        <LeftColumn>
          <DocTabs>
            <TabList>
              <DocTab>raphical Hardware Editor</DocTab>
              <DocTab $active>
                <Icon name="net" size={11} />
                PumpControlNet *
              </DocTab>
            </TabList>
            <DocNav>
              <span>◁</span>
              <span>▷</span>
              <span>▾</span>
              <CloseMark>×</CloseMark>
            </DocNav>
          </DocTabs>

          <Canvas>
            <Sheet />

            <Pin $x={55} $y={159} $w={8} $h={8} />
            <Pin $x={55} $y={177} $w={8} $h={4} />
            <Pin $x={55} $y={191} $w={8} $h={8} />
            <Pin $x={252} $y={159} $w={8} $h={8} />
            <Pin $x={252} $y={176} $w={8} $h={4} />
            <Pin $x={252} $y={191} $w={8} $h={8} />
            <OutputNode>
              <NodeTop>
                <Highlighted>Pump</Highlighted>
                <KindTag>DIG</KindTag>
              </NodeTop>
              <NodeServer>DM1611.Output1</NodeServer>
            </OutputNode>
            <Overlay $x={259} $y={163}><Icon name="eye" size={10} /></Overlay>

            <Wire />
            <Pin $x={278} $y={176} $w={4} $h={4} />
            <Pin $x={278} $y={216} $w={4} $h={4} />
            <Pin $x={522} $y={176} $w={4} $h={4} />
            <Pin $x={522} $y={216} $w={4} $h={4} />
            <Pin $x={522} $y={256} $w={4} $h={4} />

            <ClassNode>
              <ClassHead>
                <ClassTitle>
                  <GreyLine>PumpControl</GreyLine>
                  <BlackLine>PumpControl1</BlackLine>
                  <TitleCross>X</TitleCross>
                </ClassTitle>
              </ClassHead>
              <PortGrid>
                <PortCell>
                  <GreyLine>Pump</GreyLine>
                  <BlackLine>0</BlackLine>
                </PortCell>
                <PortCell>
                  <GreyLine $right>ClassSvr</GreyLine>
                  <BlackLine $right $grey>0</BlackLine>
                </PortCell>
                <PortCell>
                  <GreyLine>ActFillLevel</GreyLine>
                  <BlackLine><PortCross>X</PortCross></BlackLine>
                </PortCell>
                <PortCell>
                  <GreyLine $right>MaxBorder</GreyLine>
                  <BlackLine $right>4000</BlackLine>
                </PortCell>
                <PortCell />
                <PortCell>
                  <GreyLine $right>MinBorder</GreyLine>
                  <BlackLine $right>1000</BlackLine>
                </PortCell>
              </PortGrid>
            </ClassNode>
            <Overlay $x={524} $y={159}><Icon name="lock" size={20} /></Overlay>
            <Overlay $x={524} $y={198}><Icon name="save" size={21} /></Overlay>
            <Overlay $x={524} $y={238}><Icon name="save" size={21} /></Overlay>

            <Cursor width="12" height="17" viewBox="0 0 12 17">
              <path d="M1 1v12l3-2.500 2 5 2-1-2-4.500h4z" fill="#fff" stroke="#111" strokeWidth="1" />
            </Cursor>
          </Canvas>

          <Splitter />

          <ManagerPanel>
            <PanelTitle $pad={5}>
              ection Manager
              <Dotted />
              <CloseMark>×</CloseMark>
            </PanelTitle>
            <ManagerTools>
              <Gap $w={-15.6} />
              {slots(['panel', 'deleteX', 'save', 'folderOpen', 'config', 'filterX', 'addDoc', 'config', 'net', 'print'], [], 19.3)}
              <Sep $l={0} $r={7} />
              <CheckBox />
              <span>User folders</span>
              <Sep $l={4} $r={6} />
              <CheckBox />
              <span>Show Groups</span>
            </ManagerTools>
            <ConnectionGrid>
              <GridRow $h={13}>
                <HeadCell>BJECT</HeadCell>
                <HeadCell>SYMB. NAME</HeadCell>
                <HeadCell>APP. CLIENT</HeadCell>
                <HeadCell>SHORT COMMENT</HeadCell>
              </GridRow>
              <GridRow $h={14} $top={1}>
                <FilterCell>bject Filter</FilterCell>
                <FilterCell>Symb. Name Filter</FilterCell>
                <FilterCell>App. Client Filter</FilterCell>
                <FilterCell>Short Comment Filter</FilterCell>
              </GridRow>
              <GridRow $h={14} $top={5}>
                <DataCell $selected>
                  DM1611.Output1
                  <CellNote><Icon name="note" size={9} /></CellNote>
                </DataCell>
                <DataCell>
                  <Icon name="io" size={11} />
                  Pump
                </DataCell>
                <DataCell>
                  <Icon name="manager" size={11} />
                  PumpControl1.Pump
                  <CellNote><Icon name="note" size={9} /></CellNote>
                </DataCell>
                <DataCell />
              </GridRow>
            </ConnectionGrid>
            <BottomTabs>
              <ConnTab $bold $w={101}><span>IO Connection Manager</span></ConnTab>
              <ConnTab $w={97}><span>Project Connection Files</span></ConnTab>
              <ScrollTrack>
                <span>‹</span>
                <span>›</span>
              </ScrollTrack>
            </BottomTabs>
          </ManagerPanel>

          <ToolWindows>
            <ToolWindowTab $flush $w={46}>thon Script</ToolWindowTab>
            <ToolWindowTab $w={54}>
              <Icon name="debugger" size={11} />
              Debugger
            </ToolWindowTab>
            <ToolWindowTab $w={46}>
              <Icon name="output" size={11} />
              Output
            </ToolWindowTab>
            <ToolWindowTab $active $w={95}>
              <Icon name="manager" size={11} />
              Connection Manager
            </ToolWindowTab>
          </ToolWindows>
        </LeftColumn>

        <span />

        <RightColumn>
          <PanelTitle $left={2}>
            Class View
            <Dotted />
          </PanelTitle>
          <TreeBox>
            <TreeRowBox>
              <RootIndent />
              <TreeIcon $gap={2}><Icon name="lib" size={11} /></TreeIcon>
              <TreeLabel>PumpControl</TreeLabel>
            </TreeRowBox>
            {treeItems.map(item => (
              <TreeRow key={item.label} item={item} />
            ))}
          </TreeBox>
          <PanelTabs>
            <PanelTab $w={31}><Icon name="lib" size={11} />Lib</PanelTab>
            <PanelTab $w={31}><Icon name="file" size={11} />File</PanelTab>
            <PanelTab $w={44}><Icon name="global" size={11} />Global</PanelTab>
            <PanelTab $w={29}><Icon name="net" size={11} />Net</PanelTab>
            <PanelTab $active $w={37}><Icon name="classIcon" size={11} />Class</PanelTab>
          </PanelTabs>
          <PanelGap $h={2} />
          <PanelTitle $left={2}>
            Properties
            <Dotted />
          </PanelTitle>
          <PropsTools>
            <Icon name="categ" size={10} />
            <Icon name="sortAz" size={11} />
          </PropsTools>
          <PropsGrid>
            {props.map(([name, value, muted]) => (
              <PropRow key={name} $muted={muted}>
                <PropMargin />
                <PropCell>{name}</PropCell>
                <PropCell>{value}</PropCell>
              </PropRow>
            ))}
          </PropsGrid>
          <FootBox />
        </RightColumn>
      </Workspace>

      <StatusBar>
        <span>Offline</span>
        <span>NUM</span>
      </StatusBar>
    </Page>
  );
}
